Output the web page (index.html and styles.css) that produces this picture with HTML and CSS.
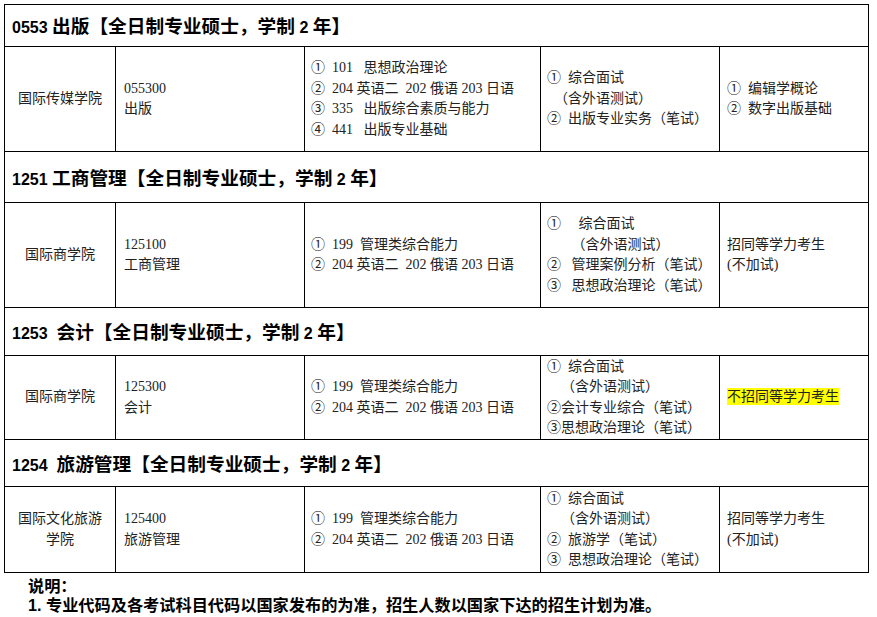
FILE: index.html
```html
<!DOCTYPE html>
<html lang="zh-CN">
<head>
<meta charset="utf-8">
<title>招生专业目录</title>
<link rel="stylesheet" href="styles.css">
</head>
<body>
<div class="page">
<table class="plan">
<colgroup>
<col class="c0"><col class="c1"><col class="c2"><col class="c3"><col class="c4">
</colgroup>
<tbody>
<tr class="sec h1"><th colspan="5"><span class="lat">0553 </span>出版【全日制专业硕士，学制<span class="lat"> 2 </span>年】</th></tr>
<tr class="row r1">
<td class="school">国际传媒学院</td>
<td class="major">055300<br>出版</td>
<td class="exam">①&nbsp;&nbsp;101&nbsp;&nbsp;&nbsp;思想政治理论<br>②&nbsp;&nbsp;204 英语二&nbsp; 202 俄语 203 日语<br>③&nbsp;&nbsp;335&nbsp;&nbsp;&nbsp;出版综合素质与能力<br>④&nbsp;&nbsp;441&nbsp;&nbsp;&nbsp;出版专业基础</td>
<td class="retest">①&nbsp;&nbsp;综合面试<br>&nbsp;&nbsp;（含外语测试）<br>②&nbsp;&nbsp;出版专业实务（笔试）</td>
<td class="note">①&nbsp;&nbsp;编辑学概论<br>②&nbsp;&nbsp;数字出版基础</td>
</tr>
<tr class="sec h2"><th colspan="5"><span class="lat">1251 </span>工商管理【全日制专业硕士，学制<span class="lat"> 2 </span>年】</th></tr>
<tr class="row r2">
<td class="school">国际商学院</td>
<td class="major">125100<br>工商管理</td>
<td class="exam">①&nbsp;&nbsp;199&nbsp;&nbsp;管理类综合能力<br>②&nbsp;&nbsp;204 英语二&nbsp; 202 俄语 203 日语</td>
<td class="retest">①&nbsp;&nbsp;&nbsp;&nbsp;&nbsp;综合面试<br>&nbsp;&nbsp;&nbsp;&nbsp;&nbsp;&nbsp;&nbsp;（含外语测试）<br>②&nbsp;&nbsp;&nbsp;管理案例分析（笔试）<br>③&nbsp;&nbsp;&nbsp;思想政治理论（笔试）</td>
<td class="note">招同等学力考生<br>(不加试)</td>
</tr>
<tr class="sec h3"><th colspan="5"><span class="lat">1253&nbsp; </span>会计【全日制专业硕士，学制<span class="lat"> 2 </span>年】</th></tr>
<tr class="row r3">
<td class="school">国际商学院</td>
<td class="major">125300<br>会计</td>
<td class="exam">①&nbsp;&nbsp;199&nbsp;&nbsp;管理类综合能力<br>②&nbsp;&nbsp;204 英语二&nbsp; 202 俄语 203 日语</td>
<td class="retest">①&nbsp;&nbsp;综合面试<br>&nbsp;&nbsp;&nbsp;&nbsp;（含外语测试）<br>②会计专业综合（笔试）<br>③思想政治理论（笔试）</td>
<td class="note"><span class="mark">不招同等学力考生</span></td>
</tr>
<tr class="sec h4"><th colspan="5"><span class="lat">1254&nbsp; </span>旅游管理【全日制专业硕士，学制<span class="lat"> 2 </span>年】</th></tr>
<tr class="row r4">
<td class="school">国际文化旅游<br>学院</td>
<td class="major">125400<br>旅游管理</td>
<td class="exam">①&nbsp;&nbsp;199&nbsp;&nbsp;管理类综合能力<br>②&nbsp;&nbsp;204 英语二&nbsp; 202 俄语 203 日语</td>
<td class="retest">①&nbsp;&nbsp;综合面试<br>&nbsp;&nbsp;&nbsp;&nbsp;（含外语测试）<br>②&nbsp;&nbsp;旅游学（笔试）<br>③&nbsp;&nbsp;思想政治理论（笔试）</td>
<td class="note">招同等学力考生<br>(不加试)</td>
</tr>
</tbody>
</table>
<div class="notes">
<p>说明：</p>
<p>1. 专业代码及各考试科目代码以国家发布的为准，招生人数以国家下达的招生计划为准。</p>
</div>
</div>
</body>
</html>
```

FILE: styles.css
```css
html, body {
  margin: 0;
  padding: 0;
  background: #ffffff;
}

.page {
  padding: 4px 0 0 4px;
}

.plan {
  border-collapse: collapse;
  table-layout: fixed;
  width: 864px;
  font-family: "Liberation Serif", "Noto Sans CJK SC", serif;
  font-size: 14px;
  line-height: 20.5px;
  color: #222222;
}

.c0 { width: 111px; }
.c1 { width: 189px; }
.c2 { width: 236px; }
.c3 { width: 179px; }
.c4 { width: 149px; }

.plan td,
.plan th {
  border: 1px solid #000000;
  padding: 0;
  vertical-align: middle;
  white-space: nowrap;
}

.plan .sec th {
  text-align: left;
  font-family: "Noto Sans CJK SC", sans-serif;
  font-weight: 700;
  font-size: 18.7px;
  line-height: 24px;
  color: #000000;
  padding: 2px 0 0 7px;
}

.lat {
  font-family: "Liberation Sans", sans-serif;
  font-size: 16px;
  font-weight: 700;
}

.h1 { height: 42px; }
.r1 { height: 105px; }
.h2 { height: 51px; }
.r2 { height: 105px; }
.h3 { height: 48px; }
.r3 { height: 84px; }
.h4 { height: 47px; }
.r4 { height: 86px; }

.plan td.school {
  text-align: center;
}

.plan td.major {
  padding-left: 8px;
}

.plan td.exam {
  padding-left: 6px;
}

.plan td.retest {
  padding-left: 6px;
}

.plan td.note {
  padding-left: 7px;
}

.mark {
  background: #ffff00;
  padding: 1px 0;
}

.notes {
  margin: 4px 0 0 24px;
  font-family: "Liberation Sans", "Noto Sans CJK SC", sans-serif;
  font-weight: 700;
  font-size: 16.2px;
  line-height: 18.5px;
  color: #000000;
}

.notes p {
  margin: 0;
}
```
